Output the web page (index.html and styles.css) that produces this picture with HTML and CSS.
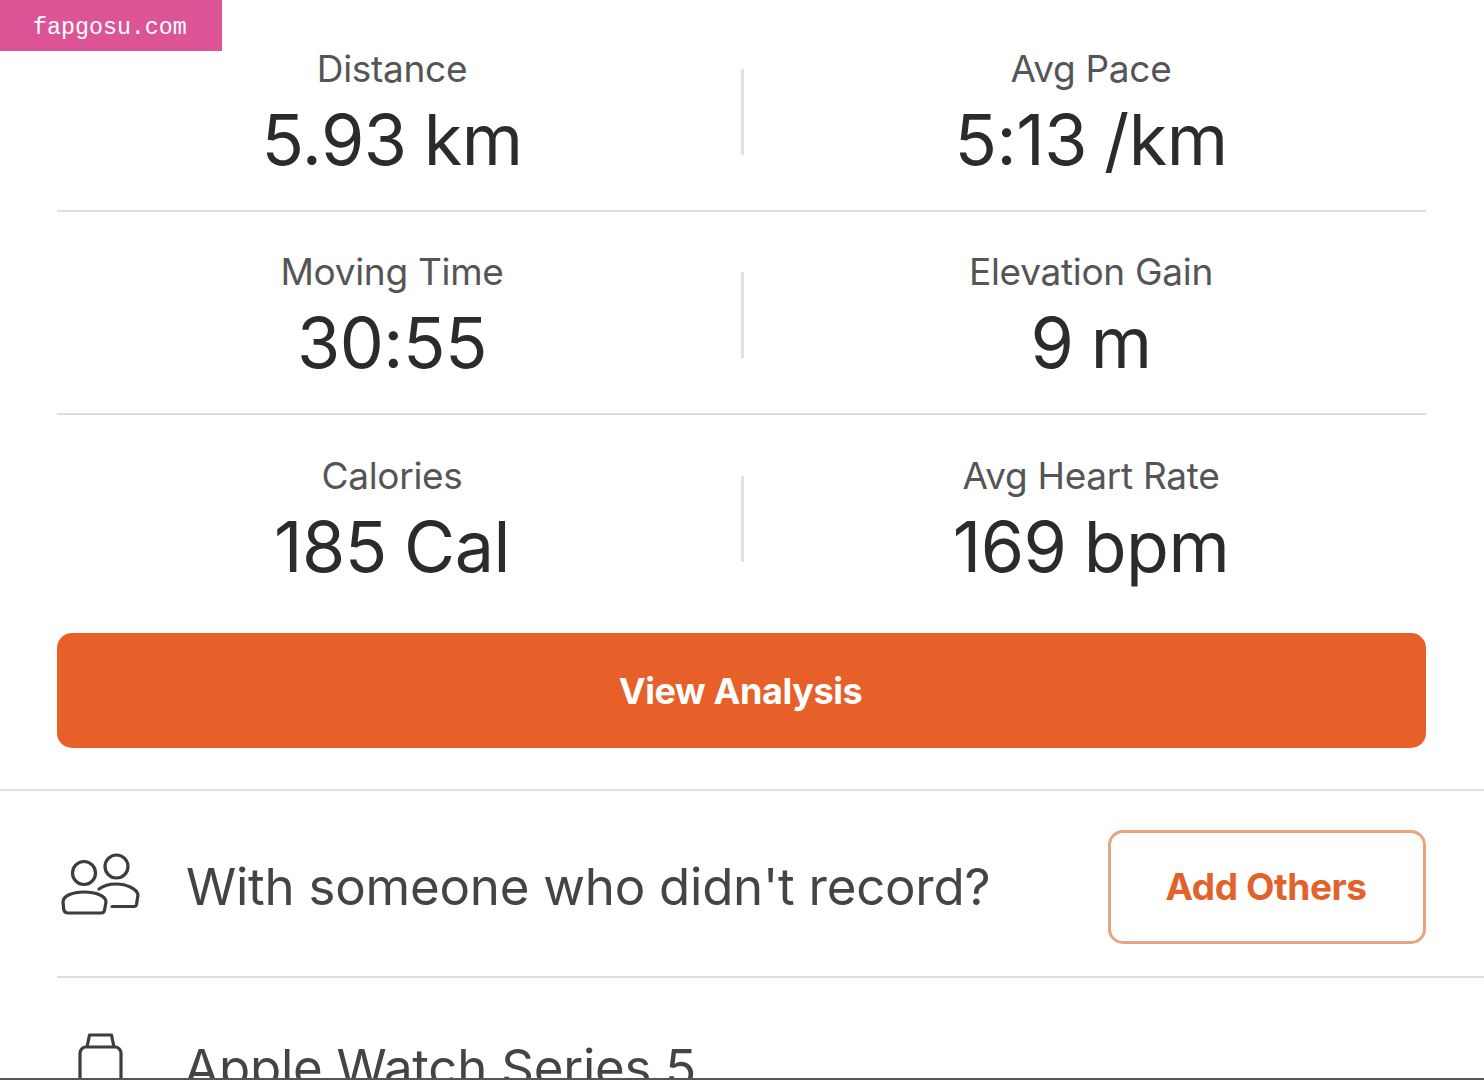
FILE: index.html
```html
<!DOCTYPE html>
<html>
<head>
<meta charset="utf-8" />
<title>Activity</title>
<link rel="stylesheet" href="styles.css">
</head>
<body>

<div class="badge">fapgosu.com</div>

<section class="stats">
	<div class="row">
		<div class="stat"><div class="label">Distance</div><div class="value">5.93 km</div></div>
		<div class="sep"></div>
		<div class="stat"><div class="label">Avg Pace</div><div class="value">5:13 /km</div></div>
	</div>
	<div class="row">
		<div class="stat"><div class="label">Moving Time</div><div class="value">30:55</div></div>
		<div class="sep"></div>
		<div class="stat"><div class="label">Elevation Gain</div><div class="value">9 m</div></div>
	</div>
	<div class="row last">
		<div class="stat"><div class="label">Calories</div><div class="value">185 Cal</div></div>
		<div class="sep"></div>
		<div class="stat"><div class="label">Avg Heart Rate</div><div class="value">169 bpm</div></div>
	</div>
	<button class="analysis">View Analysis</button>
</section>

<section class="others">
	<svg class="icon people" width="82" height="66" viewBox="0 0 82 66" fill="none" stroke="#3d3d3d" stroke-width="3.2" stroke-linecap="round" stroke-linejoin="round">
		<circle cx="24" cy="21" r="11.500"/>
		<circle cx="56.500" cy="14.500" r="11.500"/>
		<path d="M3 50c0-6 9-10 21-10s22 4 22 10l-1.500 8c-.3 1.800-1.500 3-3 3H8c-2.500 0-4-1.500-4.300-4z"/>
		<path d="M39 37c4-3 10-5 17-5 11 0 21 5 22 11l-1.500 9.500c-.2 1-.8 2-2.500 2H52"/>
	</svg>
	<span class="txt">With someone who didn't record?</span>
	<button class="add">Add Others</button>
</section>

<section class="device">
	<svg class="icon watch" width="46" height="60" viewBox="0 0 46 60" fill="none" stroke="#3d3d3d" stroke-width="3.2" stroke-linejoin="round">
		<path d="M9 15l2.500-12h22l2.500 12"/>
		<rect x="2" y="15" width="41" height="60" rx="6"/>
	</svg>
	<span class="txt">Apple Watch Series 5</span>
</section>

<div class="bottom"></div>

</body>
</html>
```

FILE: styles.css
```css
html, body {
	margin: 0;
	height: 1080px;
	overflow: hidden;
	background: #fff;
}
body {
	font-family: Inter, "Liberation Sans", sans-serif;
	color: #2b2b2b;
}
button {
	font-family: inherit;
	cursor: pointer;
}

/* bandeau en haut a gauche */
.badge {
	position: absolute;
	left: 0;
	top: 0;
	width: 222px;
	height: 51px;
	padding-left: 33px;
	box-sizing: border-box;
	background: #dd5496;
	color: #fff;
	font: 23.300px/56px "Liberation Mono", monospace;
}

.stats {
	padding: 9px 58px 0 57px;
}
.row {
	display: flex;
	align-items: center;
	gap: 13px;
	box-sizing: border-box;
	height: 203px;
	padding-top: 5px;
	border-bottom: 2px solid #dcdde0;
}
.row.last {
	border-bottom: 0;
}
.stat {
	flex: 1;
	text-align: center;
	padding-top: 4px;
}
.sep {
	width: 3px;
	height: 86px;
	margin-left: 1px;
	margin-right: -1px;
	background: #e0e1e3;
}
.label {
	font-size: 37px;
	line-height: 44px;
	color: #555;
	letter-spacing: -0.3px;
}
.value {
	font-size: 70px;
	line-height: 84px;
	margin-top: 7px;
	color: #2b2b2b;
	letter-spacing: -0.5px;
	word-spacing: -2px;
}
.analysis {
	display: block;
	width: 100%;
	height: 115px;
	margin-top: 15px;
	padding-right: 8px;
	border: 0;
	border-radius: 15px;
	background: #e7602a;
	color: #fff;
	font-size: 36px;
	font-weight: 700;
	letter-spacing: -0.4px;
}

.others {
	display: flex;
	align-items: center;
	height: 183px;
	margin: 41px 0 0;
	padding: 4px 58px 0 60px;
	border-top: 2px solid #dfe0e2;
	position: relative;
}
.others::after {
	content: "";
	position: absolute;
	left: 57px;
	right: 0;
	bottom: 0;
	height: 2px;
	background: #dcdde0;
}
.icon {
	flex: none;
}
.people {
	margin-bottom: 3px;
}
.txt {
	font-size: 51px;
	color: #444;
	margin-left: 44px;
	letter-spacing: -0.25px;
	white-space: nowrap;
}
.add {
	margin-left: auto;
	width: 318px;
	height: 114px;
	padding-right: 8px;
	border: 3px solid #e5a67f;
	border-radius: 15px;
	background: #fff;
	color: #e2622b;
	font-size: 37px;
	font-weight: 700;
	letter-spacing: -0.4px;
}

.device {
	display: flex;
	align-items: flex-start;
	padding: 54px 57px 0 78px;
	height: 60px;
}
.device .txt {
	margin: 6px 0 0 60px;
	line-height: 60px;
}
.bottom {
	position: absolute;
	left: 0;
	right: 0;
	top: 1078px;
	height: 2px;
	background: #555;
}
```
